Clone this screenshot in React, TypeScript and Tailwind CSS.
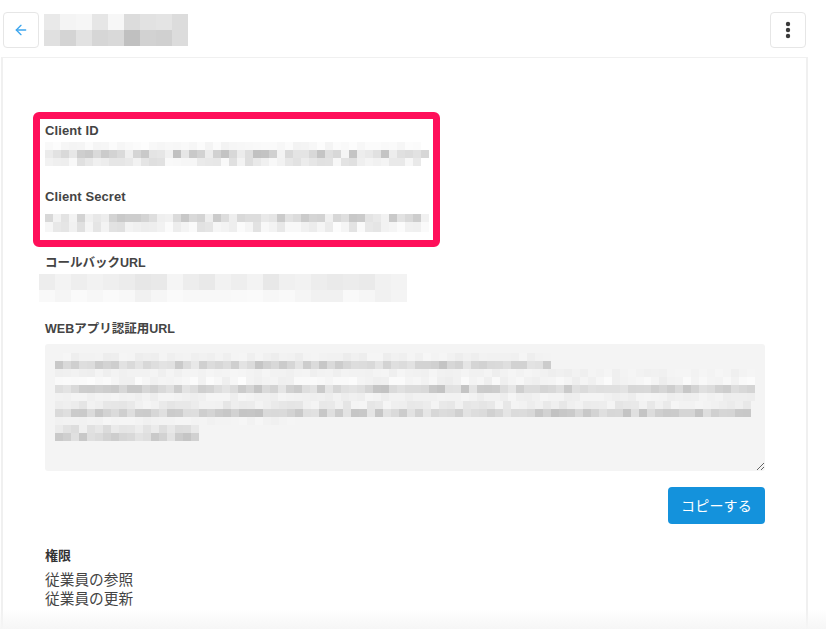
import { ArrowLeft } from 'lucide-react';

interface MosaicRow {
  base: number;
  spread: number;
  cols: number;
  h?: number;
}

// blurred-out values in the screenshot, grey cells from a small seeded generator
function Mosaic({ rows, cell, seed, className }: { rows: MosaicRow[]; cell: number; seed: number; className?: string }) {
  let s = seed;
  const next = () => {
    s = (s * 9301 + 49297) % 233280;
    return s / 233280;
  };
  return (
    <div aria-hidden className={className}>
      {rows.map((row, i) => (
        <div key={i} className="flex" style={{ height: row.h ?? cell }}>
          {Array.from({ length: row.cols }).map((_, j) => {
            const g = Math.min(255, Math.round(row.base + (next() - 0.5) * row.spread));
            return <div key={j} style={{ width: cell, background: `rgb(${g},${g},${g})` }} />;
          })}
        </div>
      ))}
    </div>
  );
}

const titleGreys = [
  [233, 244, 246, 230, 247, 220, 226, 228, 220],
  [224, 212, 226, 214, 217, 192, 210, 208, 220],
];

function Label({ children }: { children: React.ReactNode }) {
  return <div className="h-[18px] text-[13px] leading-[18px] font-bold tracking-[0.1px] text-[#444]">{children}</div>;
}

function JpLabel({ children }: { children: React.ReactNode }) {
  return <div className="h-[18px] text-[12.5px] leading-[18px] font-bold text-[#444]">{children}</div>;
}

export default function App() {
  return (
    <div className="relative h-[629px] w-[826px] overflow-hidden bg-white font-['Liberation_Sans','Noto_Sans_CJK_JP',sans-serif] text-[#444]">
      <div className="ml-[3px] flex w-[803px] items-center justify-between pt-[12px]">
        <div className="flex items-center gap-[5px]">
          <button className="flex size-9 items-center justify-center rounded border border-[#e6e6e6] bg-white">
            <ArrowLeft className="size-4 text-[#3ea6ee]" strokeWidth={2} />
          </button>
          <div aria-hidden className="blur-[0.4px]">
            {titleGreys.map((row, i) => (
              <div key={i} className="flex h-4">
                {row.map((g, j) => (
                  <div key={j} className="w-4" style={{ background: `rgb(${g},${g},${g})` }} />
                ))}
              </div>
            ))}
          </div>
        </div>
        <button className="flex size-9 items-center justify-center rounded border border-[#e6e6e6] bg-white">
          <svg width="6" height="18" viewBox="0 0 6 18" className="fill-[#3a3a3a]">
            <circle cx="3" cy="3" r="2.2" />
            <circle cx="3" cy="9" r="2.2" />
            <circle cx="3" cy="15" r="2.2" />
          </svg>
        </button>
      </div>

      <div className="mt-[9px] ml-[1px] h-[600px] w-[807px] border-x-2 border-t border-[#f0f0f0] pt-[64px] pl-[42px]">
        <Label>Client ID</Label>
        <Mosaic
          className="mt-[2px] blur-[0.6px]"
          cell={8}
          seed={11}
          rows={[
            { base: 248, spread: 10, cols: 47 },
            { base: 218, spread: 54, cols: 48 },
            { base: 236, spread: 28, cols: 47 },
          ]}
        />
        <div className="mt-[22px]">
          <Label>Client Secret</Label>
        </div>
        <Mosaic
          className="mt-[8px] blur-[0.6px]"
          cell={8}
          seed={29}
          rows={[
            { base: 222, spread: 44, cols: 48 },
            { base: 238, spread: 28, cols: 48, h: 10 },
          ]}
        />
        <div className="mt-[22px]">
          <JpLabel>コールバックURL</JpLabel>
        </div>
        <Mosaic
          className="mt-[2px] -ml-[6px] blur-[0.4px]"
          cell={16}
          seed={5}
          rows={[
            { base: 238, spread: 14, cols: 23 },
            { base: 245, spread: 12, cols: 23, h: 12 },
          ]}
        />
        <div className="mt-[18px]">
          <JpLabel>WEBアプリ認証用URL</JpLabel>
        </div>
        <div className="mt-[6px] h-[127px] w-[720px] resize overflow-auto rounded-[3px] bg-[#f4f4f4] px-[10px] pt-[9px]">
          <Mosaic
            className="blur-[0.6px]"
            cell={8}
            seed={41}
            rows={[
              { base: 241, spread: 10, cols: 62 },
              { base: 214, spread: 36, cols: 62 },
              { base: 242, spread: 8, cols: 88 },
              { base: 245, spread: 16, cols: 88 },
              { base: 212, spread: 36, cols: 88 },
              { base: 241, spread: 8, cols: 88 },
              { base: 237, spread: 16, cols: 87 },
              { base: 212, spread: 36, cols: 87 },
              { base: 243, spread: 6, cols: 30 },
              { base: 228, spread: 24, cols: 18 },
              { base: 212, spread: 30, cols: 18 },
            ]}
          />
        </div>
        <div className="mt-[16px] flex w-[720px] justify-end">
          <button className="h-[37px] w-[97px] rounded bg-[#1492dc] text-sm tracking-[0.2px] text-white">コピーする</button>
        </div>
        <div className="mt-[23px] text-[13px] leading-[18px] font-bold text-[#333]">権限</div>
        <ul className="mt-[6px] text-[14.7px] leading-[19px] text-[#444]">
          <li>従業員の参照</li>
          <li>従業員の更新</li>
        </ul>
      </div>

      {/* annotation drawn over the screenshot */}
      <div className="absolute top-[112px] left-[33px] h-[135px] w-[407px] rounded-md border-[7px] border-[#ff0f5a]" />
      <div className="absolute inset-x-0 bottom-0 h-5 bg-gradient-to-b from-white/0 to-[#f6f6f6]" />
    </div>
  );
}
